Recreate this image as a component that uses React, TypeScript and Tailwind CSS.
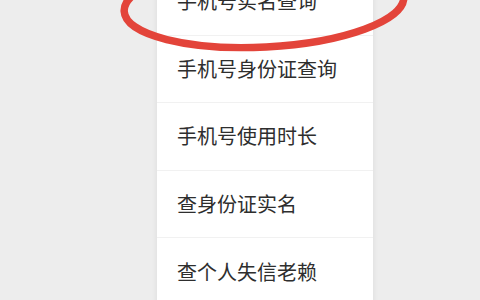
import React from "react";

const items = [
  "手机号实名查询",
  "手机号身份证查询",
  "手机号使用时长",
  "查身份证实名",
  "查个人失信老赖",
];

export default function App() {
  return (
    <div
      className="relative w-[480px] h-[300px] overflow-hidden bg-[#ededed]"
      style={{ fontFamily: '"Noto Sans CJK SC", "Noto Sans", sans-serif' }}
    >
      <div className="ml-[157px] w-[216px] -mt-[32px] bg-white shadow-[0_0_6px_rgba(0,0,0,0.08)]">
        {items.map((label, i) => (
          <div
            key={i}
            className={`h-[67.5px] flex items-center pl-[20px] text-[20px] text-[#2e2e2e] ${
              i < items.length - 1 ? "border-b border-[#f1f1f1]" : ""
            }`}
          >
            {label}
          </div>
        ))}
      </div>

      {/* red circle annotation */}
      <svg
        className="absolute left-0 top-0 pointer-events-none"
        width="480"
        height="300"
        viewBox="0 0 480 300"
      >
        <ellipse
          cx="264"
          cy="4"
          rx="140"
          ry="43"
          transform="rotate(-3 264 4)"
          fill="none"
          stroke="#e3443a"
          strokeWidth="7.5"
        />
      </svg>
    </div>
  );
}
